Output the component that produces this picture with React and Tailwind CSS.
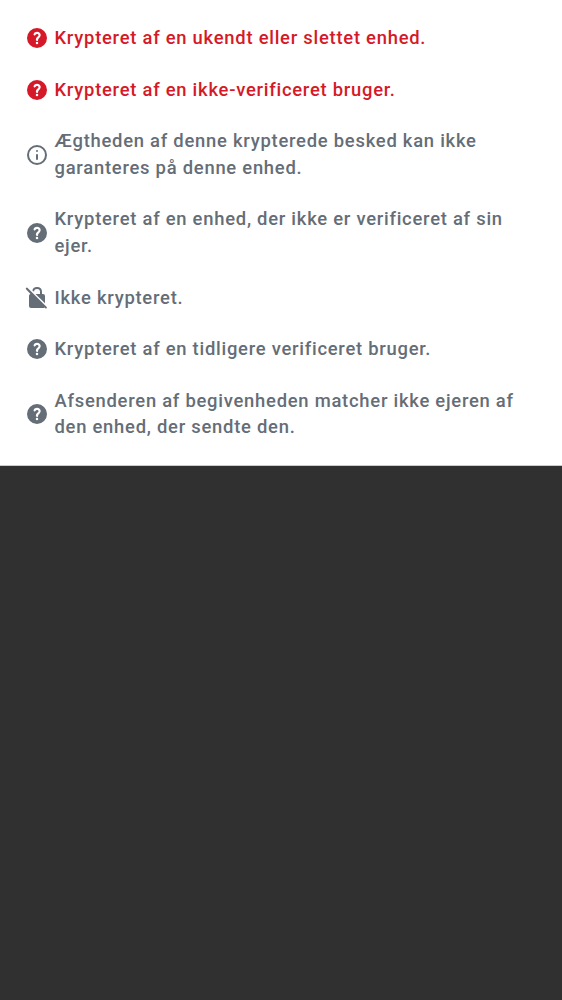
const GREY = 'text-[#656d77]';
const RED = 'text-[#d51928]';

const paths = {
  help: 'M12 2a10 10 0 1 0 0 20 10 10 0 0 0 0-20Zm0 16.2a1.25 1.25 0 1 1 0-2.5 1.25 1.25 0 0 1 0 2.5Zm2.6-6.6c-.9 1-1.5 1.3-1.5 2.3 0 .6-.5 1-1.1 1s-1.1-.4-1.1-1.1c0-1.7 1-2.4 1.8-3.2.6-.6.8-.9.8-1.4 0-.8-.6-1.3-1.5-1.3-.7 0-1.2.3-1.4.9-.3.6-.8.8-1.4.6-.6-.3-.8-.9-.6-1.5.6-1.3 1.9-2.2 3.4-2.2 2.1 0 3.7 1.5 3.7 3.4 0 1-.4 1.8-1.1 2.5Z',
  info: 'M12 2a10 10 0 1 0 0 20 10 10 0 0 0 0-20Zm0 18a8 8 0 1 1 0-16 8 8 0 0 1 0 16Zm0-9a1 1 0 0 0-1 1v4a1 1 0 1 0 2 0v-4a1 1 0 0 0-1-1Zm0-4a1 1 0 1 0 0 2 1 1 0 0 0 0-2Z',
  lockOff: 'M10.5 8H15V6a3 3 0 0 0-6-.2L7.3 4.3A5 5 0 0 1 17 6v2h1a2 2 0 0 1 2 2v7.3ZM2.4 1.8a1 1 0 0 0-1.4 1.4L5.5 8.1C4.6 8.3 4 9.1 4 10V20a2 2 0 0 0 2 2h12c.6 0 1.1-.2 1.4-.6l.9.9a1 1 0 0 0 1.4-1.4Z',
};

const messages = [
  ['help', RED, 'Krypteret af en ukendt eller slettet enhed.'],
  ['help', RED, 'Krypteret af en ikke-verificeret bruger.'],
  ['info', GREY, 'Ægtheden af denne krypterede besked kan ikke garanteres på denne enhed.'],
  ['help', GREY, 'Krypteret af en enhed, der ikke er verificeret af sin ejer.'],
  ['lockOff', GREY, 'Ikke krypteret.'],
  ['help', GREY, 'Krypteret af en tidligere verificeret bruger.'],
  ['help', GREY, 'Afsenderen af begivenheden matcher ikke ejeren af den enhed, der sendte den.'],
];

export default function App() {
  return (
    <main className="min-h-screen bg-[#303030] font-['Roboto',sans-serif]">
      <ul className="flex h-[465.5px] flex-col gap-[25.25px] border-b border-[#c8ccca] bg-white pt-[25.1px] pr-[24px] pl-[24.5px]">
        {messages.map(([icon, color, text]) => (
          <li key={text} className={`flex items-center gap-[6px] ${color}`}>
            <svg viewBox="0 0 24 24" fill="currentColor" fillRule="evenodd" className="size-[24px] shrink-0">
              <path d={paths[icon]} />
            </svg>
            <span className="text-[18.4px] leading-[26.4px] font-medium tracking-[0.75px]">{text}</span>
          </li>
        ))}
      </ul>
    </main>
  );
}
